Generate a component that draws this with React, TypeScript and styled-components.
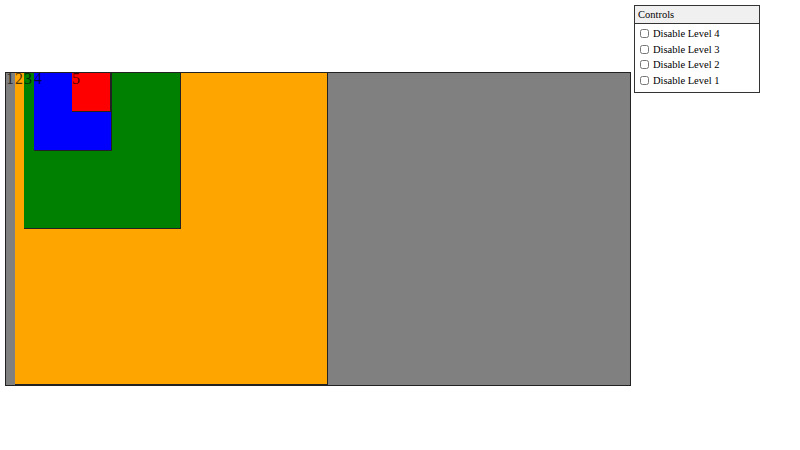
import React from "react";
import styled, { createGlobalStyle } from "styled-components";

const Global = createGlobalStyle`
  html, body { margin: 0; padding: 0; background: #fff; }
  body { font-family: "Liberation Serif", "Times New Roman", serif; font-size: 16px; color: #000; }
`;

const Page = styled.div`
  position: relative;
  width: 800px;
  height: 450px;
  padding: 72px 0 0 5px;
  box-sizing: border-box;
`;

const Outer = styled.div`
  box-sizing: border-box;
  width: 626px;
  height: 314px;
  border: 1px solid #222;
  background: #808080;
  display: flex;
  align-items: flex-start;
`;

const Level = styled.div<{ $bg: string; $w: number; $h: number; $spread?: boolean }>`
  box-sizing: border-box;
  flex: none;
  width: ${(p) => p.$w}px;
  height: ${(p) => p.$h}px;
  background: ${(p) => p.$bg};
  border-right: 1px solid #222;
  border-bottom: 1px solid #222;
  display: flex;
  align-items: flex-start;
  justify-content: ${(p) => (p.$spread ? "space-between" : "flex-start")};
`;

const Tag = styled.span<{ $w?: number }>`
  flex: none;
  width: ${(p) => (p.$w ? `${p.$w}px` : "auto")};
  font-size: 16px;
  line-height: 12px;
  color: rgba(0, 0, 0, 0.72);
  white-space: nowrap;
`;

const Panel = styled.div`
  position: absolute;
  top: 5px;
  left: 634px;
  width: 126px;
  box-sizing: border-box;
  border: 1px solid #333;
  background: #fff;
  font-size: 10.5px;
`;

const PanelHead = styled.div`
  background: #f0f0f0;
  border-bottom: 1px solid #333;
  padding: 2px 3px;
  line-height: 13px;
`;

const PanelBody = styled.div`
  padding: 2px 4px 4px 5px;
  display: flex;
  flex-direction: column;
`;

const Row = styled.label`
  display: flex;
  align-items: center;
  height: 15.5px;
  line-height: 15.5px;
`;

const Box = styled.input`
  width: 9px;
  height: 9px;
  margin: 0 4px 0 0;
`;

export default function App() {
  return (
    <>
      <Global />
      <Page>
        <Outer>
          <Tag $w={9}>1</Tag>
          <Level $bg="#ffa500" $w={313} $h={312}>
            <Tag $w={9}>2</Tag>
            <Level $bg="#008000" $w={157} $h={156}>
              <Tag $w={10}>3</Tag>
              <Level $bg="#0000ff" $w={78} $h={78} $spread>
                <Tag>4</Tag>
                <Level $bg="#ff0000" $w={39} $h={39}>
                  <Tag>5</Tag>
                </Level>
              </Level>
            </Level>
          </Level>
        </Outer>
        <Panel>
          <PanelHead>Controls</PanelHead>
          <PanelBody>
            {[4, 3, 2, 1].map((n) => (
              <Row key={n}>
                <Box type="checkbox" />
                Disable Level {n}
              </Row>
            ))}
          </PanelBody>
        </Panel>
      </Page>
    </>
  );
}
